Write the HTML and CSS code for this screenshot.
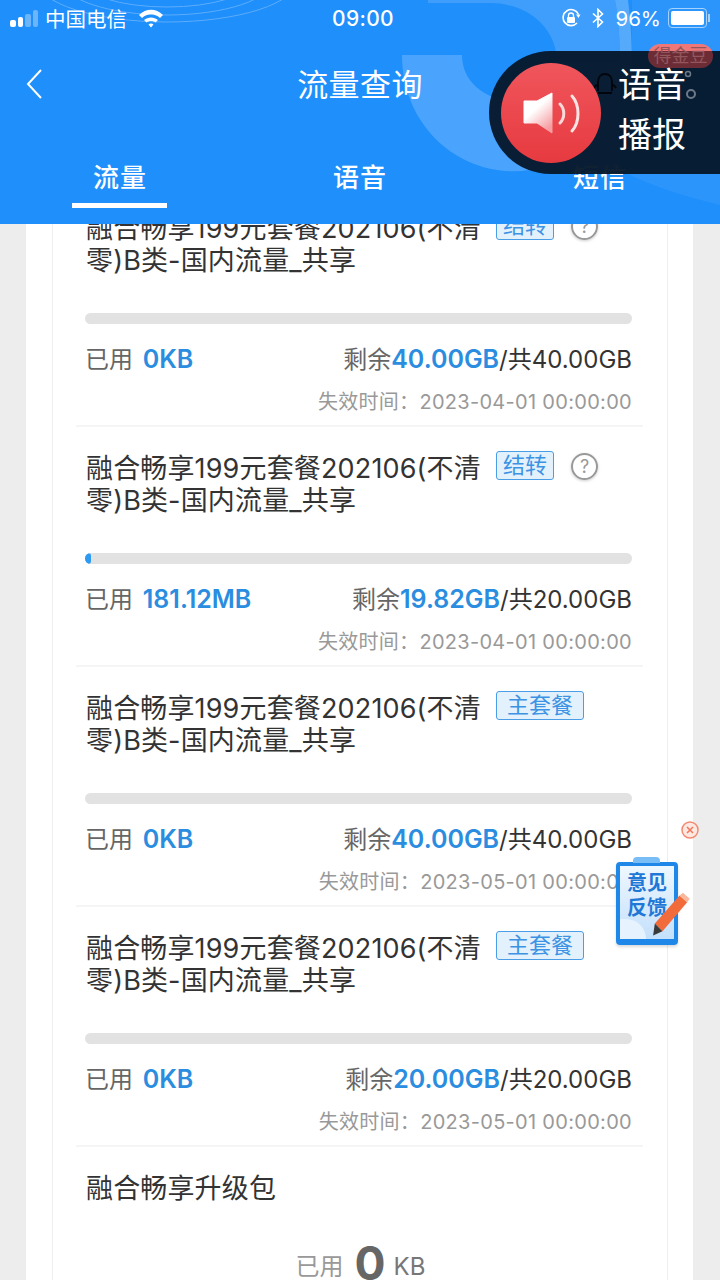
FILE: index.html
```html
<!DOCTYPE html>
<html lang="zh-CN">
<head>
    <meta charset="UTF-8">
    <meta name="viewport" content="width=device-width, initial-scale=1.0">
    <title>流量查询</title>
    <link rel="stylesheet" href="styles.css">
</head>
<body>
    <div class="header">
        <!-- 背景花纹 -->
        <svg class="header-bg" width="720" height="224" viewBox="0 0 720 224">
            <g fill="none" stroke="#5dadfb" stroke-width="1">
                <ellipse cx="167" cy="-20" rx="130" ry="42"/>
                <ellipse cx="167" cy="-20" rx="105" ry="35"/>
                <ellipse cx="167" cy="-20" rx="85" ry="27"/>
            </g>
            <path d="M632 0H720V205C680 195 650 185 628 174C632 100 632 50 632 0Z" fill="#2c95fb"/>
            <path d="M428 0H615C620 25 620 50 620 80H557V62C557 30 530 3 490 3H428Z" fill="#3f9efc"/>
            <path d="M615 0H628C632 30 632 60 632 80H620C620 50 620 25 615 0Z" fill="#55aafc"/>
            <path d="M402 55H462C462 85 490 102 520 102C545 100 557 80 557 62H620V170H530C465 180 402 130 402 55Z" fill="#4aa3fc"/>
        </svg>

        <div class="status-bar">
            <div class="status-left">
                <span class="signal"><i class="on"></i><i class="on"></i><i></i><i></i></span>
                <span>中国电信</span>
                <svg class="wifi" width="26" height="20" viewBox="0 0 26 20">
                    <path d="M1 7C8 0 18 0 25 7L22 10C16.500 5 9.500 5 4 10Z M6 12C10 8.500 16 8.500 20 12L17.500 14.500C15 12.500 11 12.500 8.500 14.500Z M10.500 16.500C12 15.300 14 15.300 15.500 16.500L13 19.500Z" fill="#fff"/>
                </svg>
            </div>
            <div class="status-time">09:00</div>
            <div class="status-right">
                <svg class="lock" width="20" height="20" viewBox="0 0 20 20">
                    <path d="M16 15A8 8 0 1 1 17.500 6.500" fill="none" stroke="#fff" stroke-width="1.600"/>
                    <path d="M15 6.500H19.500L17.500 10Z" fill="#fff"/>
                    <rect x="6" y="9" width="8" height="6" rx="1" fill="#fff"/>
                    <path d="M7.500 9V7.500A2.500 2.500 0 0 1 12.500 7.500V9" fill="none" stroke="#fff" stroke-width="1.300"/>
                </svg>
                <svg class="bt" width="14" height="20" viewBox="0 0 14 20">
                    <path d="M2 5.500L11.500 14L7 18.500V1.500L11.500 6L2 14.500" fill="none" stroke="#fff" stroke-width="1.600"/>
                </svg>
                <span>96%</span>
                <span class="battery"><i></i></span>
            </div>
        </div>

        <div class="nav">
            <svg class="back" width="18" height="30" viewBox="0 0 18 30">
                <path d="M15 1L2 15L15 29" fill="none" stroke="#fff" stroke-width="2"/>
            </svg>
            <div class="nav-title">流量查询</div>
        </div>

        <div class="tabs">
            <div class="tab active">流量</div>
            <div class="tab">语音</div>
            <div class="tab">短信</div>
        </div>
    </div>

    <div class="panel">
        <div class="card">
            <div class="item">
                <div class="item-head">
                    <div class="item-title">融合畅享199元套餐202106(不清零)B类-国内流量_共享</div>
                    <span class="tag">结转</span>
                    <span class="help">?</span>
                </div>
                <div class="bar"></div>
                <div class="stats">
                    <div class="used">已用 <b>0KB</b></div>
                    <div>剩余<b>40.00GB</b><span class="total">/共40.00GB</span></div>
                </div>
                <div class="expire">失效时间：2023-04-01 00:00:00</div>
            </div>
            <div class="item">
                <div class="item-head">
                    <div class="item-title">融合畅享199元套餐202106(不清零)B类-国内流量_共享</div>
                    <span class="tag">结转</span>
                    <span class="help">?</span>
                </div>
                <div class="bar"><div class="bar-fill" style="width: 6px"></div></div>
                <div class="stats">
                    <div class="used">已用 <b>181.12MB</b></div>
                    <div>剩余<b>19.82GB</b><span class="total">/共20.00GB</span></div>
                </div>
                <div class="expire">失效时间：2023-04-01 00:00:00</div>
            </div>
            <div class="item">
                <div class="item-head">
                    <div class="item-title">融合畅享199元套餐202106(不清零)B类-国内流量_共享</div>
                    <span class="tag tag-main">主套餐</span>
                </div>
                <div class="bar"></div>
                <div class="stats">
                    <div class="used">已用 <b>0KB</b></div>
                    <div>剩余<b>40.00GB</b><span class="total">/共40.00GB</span></div>
                </div>
                <div class="expire">失效时间：2023-05-01 00:00:00</div>
            </div>
            <div class="item">
                <div class="item-head">
                    <div class="item-title">融合畅享199元套餐202106(不清零)B类-国内流量_共享</div>
                    <span class="tag tag-main">主套餐</span>
                </div>
                <div class="bar"></div>
                <div class="stats">
                    <div class="used">已用 <b>0KB</b></div>
                    <div>剩余<b>20.00GB</b><span class="total">/共20.00GB</span></div>
                </div>
                <div class="expire">失效时间：2023-05-01 00:00:00</div>
            </div>
            <div class="item item-last">
                <div class="item-title">融合畅享升级包</div>
                <div class="used-big">已用<b>0</b><span>KB</span></div>
            </div>
        </div>
    </div>

    <!-- 语音播报浮层 -->
    <div class="voice">
        <span class="gold-badge">得金豆</span>
        <svg class="bell" width="24" height="30" viewBox="0 0 24 30">
            <path d="M5 20V11C5 6 8 3 12 3C16 3 19 6 19 11V20M1 17C2 15 3 14 5 14M23 17C22 15 21 14 19 14M5 22H19" fill="none" stroke="#02060c" stroke-width="2"/>
        </svg>
        <svg class="dots" width="16" height="30" viewBox="0 0 16 30">
            <circle cx="5" cy="4" r="2.500" fill="none" stroke="#6f7a88" stroke-width="1.500"/>
            <circle cx="8" cy="24" r="4" fill="none" stroke="#6f7a88" stroke-width="2"/>
        </svg>
        <div class="voice-btn">
            <svg width="64" height="64" viewBox="0 0 64 64">
                <defs>
                    <linearGradient id="spk" x1="0.200" y1="0.200" x2="0.700" y2="1">
                        <stop offset="0.300" stop-color="#fff"/>
                        <stop offset="1" stop-color="#f59da1"/>
                    </linearGradient>
                </defs>
                <path d="M5 20H18L33 12V52L18 42H5Z" fill="url(#spk)" stroke="url(#spk)" stroke-width="1" stroke-linejoin="round"/>
                <path d="M41 23C46 28 46 37 41 42" fill="none" stroke="#fbd9da" stroke-width="3" stroke-linecap="round"/>
                <path d="M53 15C61 24 61 41 53 50" fill="none" stroke="#fde3e4" stroke-width="3" stroke-linecap="round"/>
            </svg>
        </div>
        <div class="voice-text">语音<br>播报</div>
    </div>

    <!-- 意见反馈 -->
    <div class="feedback">
        <svg class="feedback-close" width="20" height="20" viewBox="0 0 20 20">
            <circle cx="10" cy="10" r="8" fill="#fde8e2" stroke="#f28a72" stroke-width="1.500"/>
            <path d="M7 7L13 13M13 7L7 13" stroke="#f0765c" stroke-width="1.500"/>
        </svg>
        <div class="board">
            <span class="board-clip"></span>
            <div class="board-text">意见<br>反馈</div>
        </div>
        <svg class="pencil" width="40" height="46" viewBox="0 0 44 54">
            <path d="M32 4L41 12L12 46L3 37Z" fill="#f26b3a"/>
            <path d="M32 4L36 1L44 8L41 12Z" fill="#f9b79c"/>
            <path d="M3 37L12 46L1 51Z" fill="#3a3a3a"/>
        </svg>
    </div>
</body>
</html>
```

FILE: styles.css
```css
* {
    box-sizing: border-box;
}
html, body {
    margin: 0;
    padding: 0;
}
body {
    width: 720px;
    height: 1280px;
    overflow: hidden;
    position: relative;
    background-color: #ededed;
    font-family: Inter, "Noto Sans CJK SC", sans-serif;
    color: #333;
}

/* 顶部 */
.header {
    position: relative;
    z-index: 2;
    height: 224px;
    background-color: #1e8ffb;
    color: #fff;
    overflow: hidden;
}
.header-bg {
    position: absolute;
    top: 0;
    left: 0;
}
.status-bar {
    position: relative;
    height: 36px;
    padding: 0 10px;
    display: flex;
    justify-content: space-between;
    align-items: center;
    font-size: 20.5px;
}
.status-left, .status-right {
    width: 260px;
    display: flex;
    align-items: center;
}
.status-right {
    justify-content: flex-end;
}
.status-time {
    margin-left: 6px;
    font-size: 21px;
    font-weight: 500;
    letter-spacing: 0.3px;
}
.signal {
    display: flex;
    align-items: flex-end;
    gap: 2px;
    margin-right: 7px;
}
.signal i {
    display: block;
    width: 5.5px;
    border-radius: 2px;
    background-color: #6db5fb;
}
.signal i:nth-child(1) { height: 7px; }
.signal i:nth-child(2) { height: 10px; }
.signal i:nth-child(3) { height: 13px; }
.signal i:nth-child(4) { height: 17px; }
.signal i.on {
    background-color: #fff;
}
.wifi {
    margin-left: 11px;
}
.lock {
    margin-right: 10px;
}
.bt {
    margin-right: 10px;
}
.battery {
    position: relative;
    width: 39px;
    height: 20px;
    margin: 0 3px 0 7px;
    padding: 2px;
    border: 1px solid #a5d1fd;
    border-radius: 4px;
}
.battery::after {
    content: "";
    position: absolute;
    top: 5px;
    right: -4px;
    width: 2px;
    height: 8px;
    background-color: #a5d1fd;
}
.battery i {
    display: block;
    height: 100%;
    background-color: #fff;
    border-radius: 2px;
}
.nav {
    position: relative;
    height: 124px;
    padding-top: 24px;
    text-align: center;
}
.back {
    position: absolute;
    top: 33px;
    left: 26px;
}
.nav-title {
    font-size: 31px;
    line-height: 50px;
    letter-spacing: 0.4px;
}
.tabs {
    position: relative;
    display: flex;
}
.tab {
    flex: 1;
    height: 48px;
    font-size: 26px;
    line-height: 36px;
    font-weight: 500;
    letter-spacing: 1px;
    text-align: center;
    position: relative;
}
.tab.active::after {
    content: "";
    position: absolute;
    left: 72px;
    bottom: 0;
    width: 95px;
    height: 5px;
    background-color: #fff;
}

/* 列表 */
.panel {
    width: 667px;
    margin: -37px 0 0 26px;
    padding-left: 26px;
    padding-right: 26px;
    background-color: #fff;
}
.card {
    width: 616px;
    padding: 0 24px 0 23px;
    border-left: 1px solid #eee;
    border-right: 1px solid #eee;
}
.item {
    height: 240px;
    padding: 26px 11px 0 9px;
    border-bottom: 2px solid #f5f5f5;
}
.item-last {
    border-bottom: none;
}
.item-head {
    display: flex;
    align-items: flex-start;
}
.item-title {
    margin-left: 1px;
    font-size: 27px;
    line-height: 32px;
    letter-spacing: 0.15px;
    color: #333;
}
.item-head .item-title {
    width: 398px;
    height: 64px;
    flex-shrink: 0;
}
.tag {
    height: 29px;
    margin: -2px 0 0 12px;
    padding: 0 6px;
    border: 1px solid #4a9ee6;
    border-radius: 3px;
    background-color: #e3f1fd;
    color: #3d93e3;
    font-size: 22px;
    line-height: 26px;
}
.tag-main {
    padding: 0 10px;
}
.help {
    width: 27px;
    height: 27px;
    margin: 0 0 0 17px;
    border: 2px solid #999;
    border-radius: 50%;
    color: #999;
    font-size: 18px;
    line-height: 23px;
    text-align: center;
    box-shadow: 0 1px 3px rgba(0, 0, 0, 0.2);
}
.bar {
    height: 11px;
    margin-top: 36px;
    border-radius: 6px;
    background-color: #e2e2e2;
    overflow: hidden;
}
.bar-fill {
    height: 100%;
    border-radius: 6px;
    background-color: #2b9af0;
}
.stats {
    margin-top: 17px;
    display: flex;
    justify-content: space-between;
    font-size: 24px;
    line-height: 36px;
    color: #666;
}
.stats b {
    font-size: 25px;
    font-weight: 600;
    color: #2b8de0;
}
.used b {
    margin-left: 3px;
}
.total {
    color: #333;
}
.expire {
    margin-top: 10px;
    font-size: 20px;
    line-height: 28px;
    letter-spacing: 0.3px;
    color: #999;
    text-align: right;
}
.used-big {
    margin-top: 33px;
    padding-left: 4px;
    text-align: center;
    font-size: 24px;
    line-height: 50px;
    color: #999;
}
.used-big b {
    margin: 0 8px 0 11px;
    font-size: 46px;
    font-weight: 700;
    color: #666;
    vertical-align: -5px;
}
.used-big span {
    color: #777;
}

/* 语音播报 */
.voice {
    position: absolute;
    z-index: 5;
    top: 51px;
    left: 489px;
    width: 231px;
    height: 123px;
    padding-left: 12px;
    display: flex;
    align-items: center;
    border-radius: 62px 0 0 62px;
    background-color: rgba(6, 24, 44, 0.96);
}
.gold-badge {
    position: absolute;
    top: -7px;
    left: 159px;
    width: 65px;
    height: 24px;
    border-radius: 12px;
    background: linear-gradient(#ef7777 0, #ef7777 7px, #6b2c36 7px);
    color: #93565c;
    font-size: 18px;
    line-height: 24px;
    text-align: center;
}
.bell {
    position: absolute;
    top: 20px;
    left: 104px;
}
.dots {
    position: absolute;
    top: 19px;
    left: 194px;
}
.voice-btn {
    position: relative;
    width: 100px;
    height: 100px;
    flex-shrink: 0;
    display: flex;
    align-items: center;
    justify-content: center;
    border-radius: 50%;
    background: linear-gradient(#f0565c, #e63a40);
}
.voice-text {
    position: relative;
    margin: -5px 0 0 17px;
    color: #fff;
    font-size: 34px;
    line-height: 50px;
}

/* 意见反馈 */
.feedback {
    position: absolute;
    z-index: 3;
    top: 820px;
    left: 614px;
    width: 80px;
    height: 130px;
}
.feedback-close {
    position: absolute;
    top: 0;
    right: -6px;
}
.board {
    position: absolute;
    top: 42px;
    left: 2px;
    width: 62px;
    height: 83px;
    border: 4px solid #1f87e8;
    border-bottom-width: 6px;
    border-radius: 4px;
    background: linear-gradient(#eef7ff, #c4e0fb);
    box-shadow: 0 2px 3px rgba(0, 0, 0, 0.15);
}
.board::after {
    content: "";
    position: absolute;
    left: 0;
    bottom: 0;
    width: 26px;
    height: 20px;
    border-radius: 0 20px 0 0;
    background-color: #e6f2fe;
}
.board-clip {
    position: absolute;
    top: -9px;
    left: 13px;
    width: 27px;
    height: 6px;
    border-radius: 4px 4px 0 0;
    background-color: #79bdf6;
}
.board-text {
    padding-top: 5px;
    text-align: center;
    color: #1f78d6;
    font-size: 20px;
    line-height: 25px;
    font-weight: 700;
}
.pencil {
    position: absolute;
    top: 72px;
    left: 37px;
}
```
